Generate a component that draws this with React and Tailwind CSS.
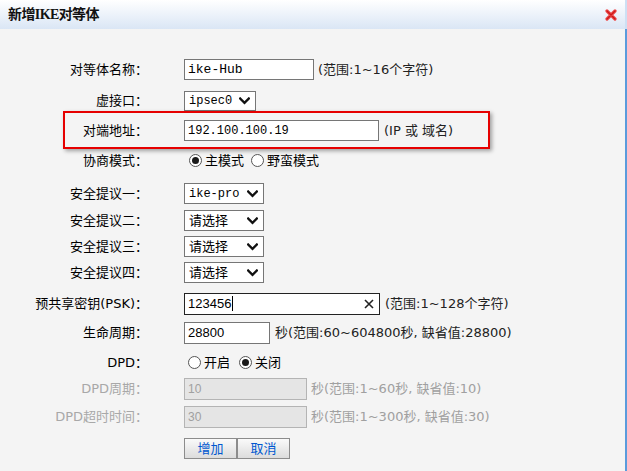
import React from "react";

const Chevron = () => (
  <svg width="11" height="8" viewBox="0 0 11 8" className="shrink-0">
    <path d="M1.2 1.5 L5.5 5.8 L9.8 1.5" fill="none" stroke="#111" strokeWidth="2.3" strokeLinecap="square" />
  </svg>
);

const Radio = ({ checked }) => (
  <span className="w-[13px] h-[13px] rounded-full border border-[#555] bg-white flex items-center justify-center shrink-0">
    {checked && <span className="w-[7px] h-[7px] rounded-full bg-[#1a1a1a]" />}
  </span>
);

function Row({ label, disabled, className, children, extra }) {
  return (
    <div className={`relative flex h-[21px] items-center ${className}`}>
      <div className={`w-[148px] text-right whitespace-nowrap ${disabled ? "text-[#a8a8a8]" : "text-black"}`}>{label}</div>
      <div className="ml-[36px] flex items-center">{children}</div>
      {extra}
    </div>
  );
}

function Select({ text, mono, w, h }) {
  return (
    <div className={`flex items-center justify-between border border-[#767676] bg-white pl-[4px] pr-[5px] ${w} ${h}`}>
      <span className={mono ? "font-['Liberation_Mono',monospace] text-[12px]" : "text-[13px]"}>{text}</span>
      <Chevron />
    </div>
  );
}

export default function App() {
  return (
    <div className="w-[627px] h-[471px] bg-[#f4f4f4] flex flex-col text-[13px] text-black font-['DejaVu_Sans','Noto_Sans_CJK_SC',sans-serif] overflow-hidden">
      <div className="h-[29px] shrink-0 flex items-center justify-between pl-[8px] pr-[8px] bg-linear-to-b from-white to-[#dae6f5] border-r-2 border-[#cde0f4]">
        <span className="font-bold text-[14px] text-[#111] font-['Liberation_Serif','Noto_Sans_CJK_SC',serif] tracking-[-0.6px]">新增IKE对等体</span>
        <svg width="12" height="12" viewBox="0 0 12 12">
          <path d="M2 2 L10 10 M10 2 L2 10" stroke="#ee4a4a" strokeWidth="3.2" strokeLinecap="round" />
          <path d="M2 2 L10 10 M10 2 L2 10" stroke="#cc1c1c" strokeWidth="1.3" strokeLinecap="round" />
        </svg>
      </div>
      <div className="flex-1 flex flex-col border-r-2 border-[#5a9bdc]">
        <Row label="对等体名称：" className="mt-[30px]">
          <div className="w-[130px] h-[21px] border border-[#767676] bg-white pl-[3px] flex items-center font-['Liberation_Mono',monospace] text-[13px]">ike-Hub</div>
          <span className="ml-[4px] text-[#222]">(范围:1~16个字符)</span>
        </Row>
        <Row label="虚接口：" className="mt-[10px]">
          <Select text="ipsec0" mono w="w-[72px]" h="h-[20px]" />
        </Row>
        <Row
          label="对端地址："
          className="mt-[9px]"
          extra={
            <div className="absolute left-[63px] top-[-9px] w-[427px] h-[38px] border-2 border-[#e60000] shadow-[2px_2px_4px_rgba(0,0,0,0.35)] pointer-events-none" />
          }
        >
          <div className="w-[195px] h-[21px] border border-[#767676] bg-white pl-[3px] flex items-center font-['Liberation_Mono',monospace] text-[12px]">192.100.100.19</div>
          <span className="ml-[5px] text-[#222]">(IP 或 域名)</span>
        </Row>
        <Row label="协商模式：" className="mt-[9px]">
          <div className="flex items-center ml-[5px]">
            <Radio checked />
            <span className="ml-[3px]">主模式</span>
            <span className="ml-[7px]"><Radio /></span>
            <span className="ml-[3px]">野蛮模式</span>
          </div>
        </Row>
        <Row label="安全提议一：" className="mt-[12px]">
          <Select text="ike-pro" mono w="w-[80px]" h="h-[21px]" />
        </Row>
        <Row label="安全提议二：" className="mt-[6px]">
          <Select text="请选择" w="w-[80px]" h="h-[21px]" />
        </Row>
        <Row label="安全提议三：" className="mt-[5px]">
          <Select text="请选择" w="w-[80px]" h="h-[21px]" />
        </Row>
        <Row label="安全提议四：" className="mt-[5px]">
          <Select text="请选择" w="w-[80px]" h="h-[21px]" />
        </Row>
        <Row label="预共享密钥(PSK)：" className="mt-[10px]">
          <div className="w-[196px] h-[22px] border border-[#222] bg-white pl-[3px] pr-[5px] flex items-center justify-between font-['Liberation_Sans',sans-serif] text-[13px]">
            <span className="flex items-center">123456<span className="ml-[1px] w-px h-[15px] bg-black" /></span>
            <svg width="10" height="10" viewBox="0 0 10 10">
              <path d="M1 1 L9 9 M9 1 L1 9" stroke="#222" strokeWidth="1.6" />
            </svg>
          </div>
          <span className="ml-[5px] text-[#222]">(范围:1~128个字符)</span>
        </Row>
        <Row label="生命周期：" className="mt-[8px]">
          <div className="w-[86px] h-[22px] border border-[#767676] bg-white pl-[3px] flex items-center font-['Liberation_Sans',sans-serif] text-[13px]">28800</div>
          <span className="ml-[5px] text-[#222]">秒(范围:60~604800秒, 缺省值:28800)</span>
        </Row>
        <Row label="DPD：" className="mt-[9px]">
          <div className="flex items-center ml-[4px]">
            <Radio />
            <span className="ml-[3px]">开启</span>
            <span className="ml-[9px]"><Radio checked /></span>
            <span className="ml-[3px]">关闭</span>
          </div>
        </Row>
        <Row label="DPD周期：" disabled className="mt-[5px]">
          <div className="w-[123px] h-[22px] border border-[#b4b4b4] bg-[#e5e5e5] pl-[3px] flex items-center text-[#a0a0a0] font-['Liberation_Sans',sans-serif] text-[12px]">10</div>
          <span className="ml-[4px] text-[#a0a0a0]">秒(范围:1~60秒, 缺省值:10)</span>
        </Row>
        <Row label="DPD超时时间：" disabled className="mt-[7px]">
          <div className="w-[123px] h-[22px] border border-[#b4b4b4] bg-[#e5e5e5] pl-[3px] flex items-center text-[#a0a0a0] font-['Liberation_Sans',sans-serif] text-[12px]">30</div>
          <span className="ml-[4px] text-[#a0a0a0]">秒(范围:1~300秒, 缺省值:30)</span>
        </Row>
        <Row label="" className="mt-[11px]">
          <div className="flex">
            <button className="w-[53px] h-[21px] border border-[#8c8c8c] bg-linear-to-b from-[#fafafa] to-[#dcdcdc] text-[#0058d0] text-[13px] leading-none flex items-center justify-center">增加</button>
            <button className="w-[53px] h-[21px] border border-[#8c8c8c] bg-linear-to-b from-[#fafafa] to-[#dcdcdc] text-[#0058d0] text-[13px] leading-none flex items-center justify-center">取消</button>
          </div>
        </Row>
      </div>
    </div>
  );
}
